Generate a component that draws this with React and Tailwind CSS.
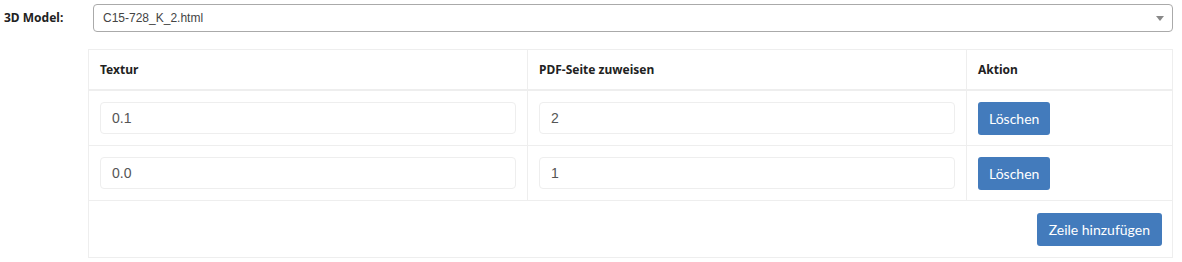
import React from 'react';

const rows = [
  { textur: '0.1', page: '2' },
  { textur: '0.0', page: '1' },
];

const ui = { fontFamily: '"Noto Sans", "Open Sans", sans-serif' };
const btn = { fontFamily: 'Lato, sans-serif' };
const field = { fontFamily: '"Liberation Sans", Arial, sans-serif' };

export default function App() {
  return (
    <div className="w-[1182px] h-[262px] bg-white pt-1" style={ui}>
      {/* model select */}
      <div className="flex items-center">
        <label className="w-[93px] pl-1 text-[12px] font-bold text-[#222]">3D Model:</label>
        <div className="w-[1080px] h-[28px] border border-[#aaa] rounded-[4px] flex items-center justify-between pl-[9px] pr-[8px]">
          <span className="text-[12px] text-[#444]" style={field}>C15-728_K_2.html</span>
          <span className="w-0 h-0 border-l-[4px] border-r-[4px] border-t-[5px] border-l-transparent border-r-transparent border-t-[#888]" />
        </div>
      </div>

      {/* texture table */}
      <div className="ml-[88px] mt-[17px] w-[1085px] border border-[#eee]">
        <div className="grid grid-cols-[438px_439px_1fr] h-[41px] border-b-2 border-[#eee]">
          <div className="px-[11px] flex items-center text-[12px] font-bold text-[#222]">Textur</div>
          <div className="px-[11px] flex items-center text-[12px] font-bold text-[#222] border-l border-[#eee]">PDF-Seite zuweisen</div>
          <div className="px-[11px] flex items-center text-[12px] font-bold text-[#222] border-l border-[#eee]">Aktion</div>
        </div>
        {rows.map((r, i) => (
          <div key={i} className="grid grid-cols-[438px_439px_1fr] h-[55px] border-b border-[#eee]">
            <div className="px-[11px] flex items-center">
              <div className="w-full h-[32px] border border-[#eee] rounded-[4px] flex items-center px-[11px] text-[14px] text-[#555]" style={field}>{r.textur}</div>
            </div>
            <div className="px-[11px] flex items-center border-l border-[#eee]">
              <div className="w-full h-[32px] border border-[#eee] rounded-[4px] flex items-center px-[11px] text-[14px] text-[#555]" style={field}>{r.page}</div>
            </div>
            <div className="px-[11px] flex items-center border-l border-[#eee]">
              <button className="h-[33px] px-[11px] rounded-[3px] bg-[#437bbc] text-white text-[14px]" style={btn}>Löschen</button>
            </div>
          </div>
        ))}
        <div className="h-[56px] flex items-center justify-end pr-[10px]">
          <button className="h-[33px] px-[12px] rounded-[3px] bg-[#437bbc] text-white text-[14px]" style={btn}>Zeile hinzufügen</button>
        </div>
      </div>
    </div>
  );
}
